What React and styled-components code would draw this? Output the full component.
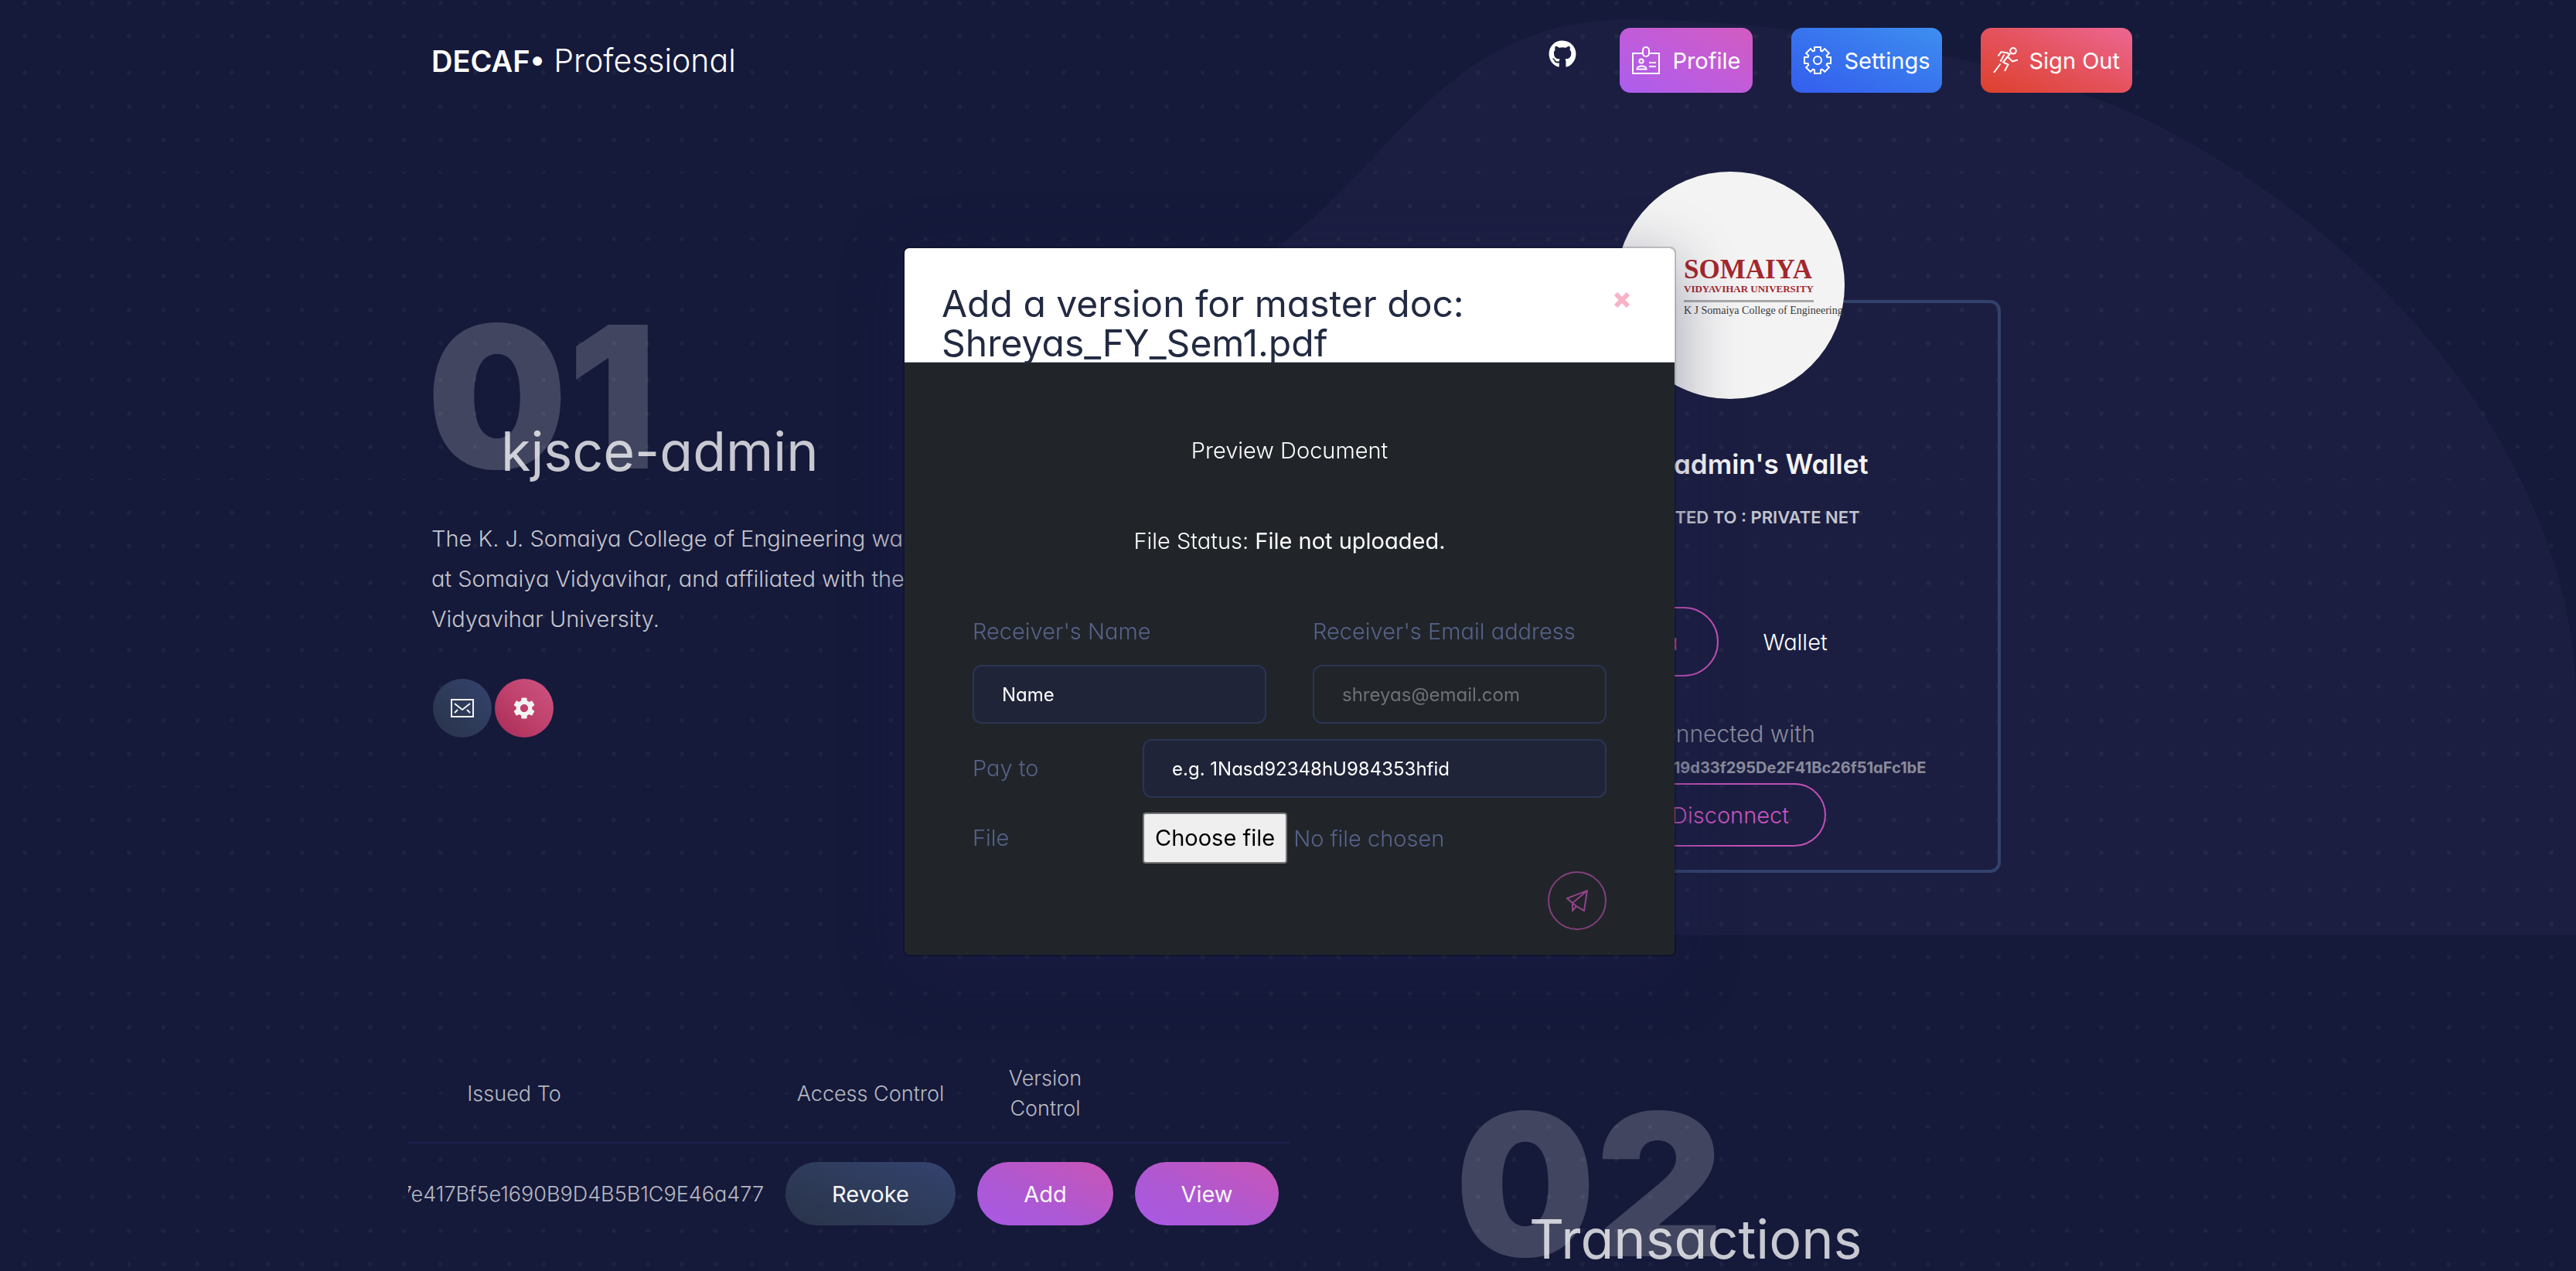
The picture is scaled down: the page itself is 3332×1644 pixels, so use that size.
import React from "react";
import styled, { createGlobalStyle, css } from "styled-components";
import { FaGithub } from "react-icons/fa";
import { MdSettings } from "react-icons/md";

const GlobalStyle = createGlobalStyle`
  *, *::before, *::after { box-sizing: border-box; }
  body {
    margin: 0;
    background: #15193a;
    color: #ffffff;
    font-family: Inter, "Open Sans", sans-serif;
    font-size: 29px;
    font-weight: 300;
    font-feature-settings: "cv11";
  }
  h1, h2, h3, h4, p { margin: 0; font-weight: inherit; }
  button, input { font: inherit; font-feature-settings: inherit; }
  button { cursor: pointer; }
`;

const violet = "linear-gradient(to top right, #a85ae6, #ad58d4 40%, #c955b6)";

const Page = styled.div`
  position: relative;
  min-height: 100vh;
  padding-left: 4px;
  overflow: hidden;
`;

const Backdrop = styled.svg`
  position: absolute;
  inset: 0;
  width: 100%;
  height: 100%;
`;

const Container = styled.div`
  position: relative;
  max-width: 2280px;
  margin: 0 auto;
`;

/* Header */

const Header = styled.header`
  display: flex;
  align-items: center;
  justify-content: space-between;
  padding: 36px 50px 0 30px;
`;

const Brand = styled.a`
  color: #ffffff;
  font-size: 41px;
  text-decoration: none;
  strong {
    font-size: 38px;
    font-weight: 600;
  }
`;

const Nav = styled.nav`
  display: flex;
  gap: 50px;
`;

const GithubLink = styled.a`
  display: flex;
  padding: 16px 6px 0 0;
  color: #ffffff;
`;

const navTones = {
  violet: "linear-gradient(to top right, #ab5eee, #bf5cdc 45%, #d25bc0)",
  blue: "linear-gradient(to top right, #345eee, #3874ee 50%, #3d8ff0)",
  red: "linear-gradient(to top right, #dd402c, #e4525c 50%, #ec6793)",
};

const NavButton = styled.button`
  display: flex;
  align-items: center;
  gap: ${(p) => p.$gap}px;
  height: 84px;
  padding: 0 16px;
  border: 0;
  border-radius: 14px;
  background: ${(p) => navTones[p.$tone]};
  color: #ffffff;
  font-weight: 400;
`;

/* Hero */

const Hero = styled.section`
  display: flex;
  justify-content: space-between;
  padding: 0 220px 0 30px;
`;

const Intro = styled.div`
  width: 900px;
  margin-top: 293px;
`;

const Title = styled.h1`
  display: flex;
  flex-direction: column;
`;

const TitleNumber = styled.span`
  margin-left: -6px;
  color: rgba(243, 243, 243, 0.2);
  font-size: 256px;
  font-weight: 900;
  line-height: 200px;
`;

const TitleText = styled.span`
  margin: -69px 0 0 90px;
  color: rgba(255, 255, 255, 0.76);
  font-size: 70px;
  font-weight: 400;
  line-height: 80px;
`;

const Bio = styled.p`
  margin-top: 47px;
  color: rgba(255, 255, 255, 0.76);
  line-height: 52px;
`;

const RoundActions = styled.div`
  display: flex;
  gap: 4px;
  margin: 51px 0 0 2px;
`;

const roundTones = {
  slate: css`
    background: linear-gradient(to top right, #29344a, #2e3b5a 50%, #344370);
    color: #f3f3f3;
  `,
  pink: css`
    background: linear-gradient(to top right, #a82c58, #bf416c 50%, #cf5583);
    color: #f3f3f3;
  `,
  outline: css`
    border: 2px solid #80407c;
    background: transparent;
    color: #8f4489;
  `,
};

const RoundButton = styled.button`
  display: flex;
  align-items: center;
  justify-content: center;
  width: 76px;
  height: 76px;
  padding: 0;
  border: 0;
  border-radius: 50%;
  ${(p) => roundTones[p.$tone]}
`;

/* Wallet card */

const Card = styled.article`
  display: flex;
  flex-direction: column;
  align-items: center;
  width: 700px;
  margin-top: 268px;
  padding-bottom: 30px;
  border: 4px solid #32426c;
  border-radius: 14px;
`;

const Avatar = styled.div`
  display: flex;
  flex-direction: column;
  align-items: flex-start;
  width: 296px;
  height: 294px;
  margin-top: -170px;
  padding: 110px 0 0 88px;
  border-radius: 50%;
  background: #f3f3f3;
  font-family: "Liberation Serif", serif;
  white-space: nowrap;
`;

const LogoName = styled.strong`
  color: #a3282e;
  font-size: 35px;
  font-weight: 700;
  line-height: 34px;
`;

const LogoSub = styled.span`
  padding-bottom: 6px;
  border-bottom: 3px solid #a9a9ab;
  color: #a3282e;
  font-size: 13px;
  font-weight: 700;
  line-height: 16px;
`;

const LogoCollege = styled.span`
  margin-top: 2px;
  color: #3a3a3c;
  font-size: 14px;
  font-weight: 400;
  line-height: 18px;
`;

const CardTitle = styled.h2`
  margin-top: 59px;
  color: #f3f3f5;
  font-size: 35px;
  font-weight: 600;
  line-height: 50px;
`;

const Network = styled.h3`
  margin-top: 26px;
  color: #c4c5ce;
  font-size: 22px;
  font-weight: 600;
  line-height: 36px;
`;

const Tabs = styled.div`
  display: flex;
  margin-top: 98px;
`;

const Tab = styled.button`
  height: 90px;
  padding: 0 ${(p) => (p.$active ? 50 : 56)}px;
  border: 2px solid ${(p) => (p.$active ? "#c050b4" : "transparent")};
  border-radius: 45px;
  background: transparent;
  color: ${(p) => (p.$active ? "#c050b4" : "#ffffff")};
`;

const Connected = styled.p`
  margin-top: 53px;
  color: #8a8b9c;
  font-size: 30px;
  line-height: 42px;
`;

const Address = styled.p`
  margin-top: 8px;
  color: #8a8b9c;
  font-size: 20px;
  font-weight: 700;
  line-height: 30px;
`;

const Disconnect = styled.button`
  height: 82px;
  margin-top: 5px;
  padding: 0 46px;
  border: 2px solid #c050b4;
  border-radius: 41px;
  background: transparent;
  color: #c955bd;
`;

/* Documents */

const Lower = styled.section`
  display: flex;
  align-items: flex-start;
  justify-content: space-between;
  margin-top: 222px;
`;

const TableClip = styled.div`
  display: flex;
  justify-content: flex-end;
  width: 1140px;
  overflow: hidden;
`;

const Table = styled.table`
  flex: none;
  width: 1340px;
  border-collapse: collapse;
  table-layout: fixed;
  color: rgba(255, 255, 255, 0.7);
  text-align: center;
`;

const Col = styled.col`
  width: ${(p) => p.$width}px;
`;

const Th = styled.th`
  padding: 24px 14px;
  padding-inline: ${(p) => (p.$wrap ? "44px" : "14px")};
  border-bottom: 2px solid #1f2250;
  font-size: 27px;
  font-weight: 300;
  line-height: 39px;
`;

const Td = styled.td`
  padding: 24px 14px;
  font-size: 27px;
  text-align: right;
  white-space: nowrap;
`;

const PillButton = styled.button`
  width: 100%;
  height: 82px;
  border: 0;
  border-radius: 41px;
  background: ${(p) =>
    p.$violet
      ? violet
      : "linear-gradient(to top right, #29344a, #2e3b5a 50%, #344370)"};
  color: #f6f6f8;
  font-size: 29px;
  font-weight: 400;
`;

const Transactions = styled.div`
  width: 920px;
  margin-top: 81px;
`;

/* Modal */

const Overlay = styled.div`
  position: fixed;
  inset: 0;
  padding: 319px 0 0 4px;
`;

const Dialog = styled.section`
  width: 1000px;
  margin: 0 auto;
  border: 2px solid rgba(0, 0, 0, 0.2);
  border-radius: 8px;
  background: #212529;
  background-clip: padding-box;
  box-shadow: 0 20px 80px rgba(30, 33, 75, 0.4);
`;

const DialogHeader = styled.header`
  display: flex;
  align-items: flex-start;
  justify-content: space-between;
  height: 148px;
  padding: 46px 58px 0 48px;
  border-bottom: 1px solid #b9bcc0;
  border-radius: 6px 6px 0 0;
  background: #ffffff;
`;

const DialogTitle = styled.h2`
  width: 720px;
  color: #222a42;
  font-size: 48px;
  font-weight: 400;
  line-height: 51px;
`;

const Close = styled.button`
  display: flex;
  margin-top: 11px;
  padding: 0;
  border: 0;
  background: none;
  color: #f9b3c9;
`;

const DialogBody = styled.form`
  display: flex;
  flex-direction: column;
  padding: 93px 88px 32px;
`;

const Line = styled.p`
  margin-bottom: 75px;
  line-height: 42px;
  text-align: center;
  strong { font-weight: 400; }
`;

const FieldPair = styled.div`
  display: grid;
  grid-template-columns: 1fr 1fr;
  gap: 60px;
  margin-bottom: 20px;
`;

const Field = styled.div`
  display: flex;
  flex-direction: column;
  gap: 22px;
`;

const FieldRow = styled.div`
  display: grid;
  grid-template-columns: 220px 1fr;
  align-items: center;
  margin-bottom: 19px;
`;

const Label = styled.label`
  color: #56628a;
  line-height: 42px;
`;

const TextInput = styled.input`
  width: 100%;
  height: 76px;
  padding: 0 36px;
  border: 2px solid #2b3553;
  border-radius: 12px;
  background: ${(p) => (p.$filled ? "#1f2438" : "transparent")};
  color: #ffffff;
  font-size: 24px;
  font-weight: 400;
  outline: 0;
  &::placeholder {
    color: ${(p) => (p.$filled ? "#ffffff" : "#6e7174")};
    opacity: 1;
  }
`;

const FilePicker = styled.label`
  display: flex;
  align-items: center;
  gap: 8px;
  color: #56628a;
  cursor: pointer;
`;

const HiddenFile = styled.input`
  position: absolute;
  width: 1px;
  height: 1px;
  opacity: 0;
`;

const FileButton = styled.span`
  padding: 10px 14px;
  border: 2px solid #767676;
  border-radius: 4px;
  background: #efefef;
  color: #000000;
  font-weight: 400;
  line-height: 42px;
`;

const Actions = styled.div`
  display: flex;
  justify-content: flex-end;
  margin-top: -9px;
`;

/* Icons */

const Stroke = ({ size, width = size, box, weight = 2, children }) => (
  <svg
    width={width}
    height={size}
    viewBox={box}
    fill="none"
    stroke="currentColor"
    strokeWidth={weight}
    aria-hidden="true"
  >
    {children}
  </svg>
);

const BadgeIcon = () => (
  <Stroke size={36} box="0 0 36 36">
    <path d="M14 9H1v26h34V9H22" />
    <rect x="14" y="1" width="8" height="12" rx="4" />
    <circle cx="12" cy="19" r="2.6" />
    <path d="M6.5 29.5c0-5.5 12-5.5 12 0z" />
    <path d="M22 21h9M22 26h9" />
  </Stroke>
);

const gearPath =
  Array.from({ length: 8 }, (_, i) => {
    const a = (i * Math.PI) / 4;
    return [
      [12.5, -4],
      [17, -4],
      [17, 4],
      [12.5, 4],
    ]
      .map(([r, t]) => {
        const x = 18 + r * Math.cos(a) - t * Math.sin(a);
        const y = 18 + r * Math.sin(a) + t * Math.cos(a);
        return `${x.toFixed(2)} ${y.toFixed(2)}`;
      })
      .join("L");
  })
    .map((s, i) => (i ? "L" : "M") + s)
    .join("") + "Z";

const GearIcon = () => (
  <Stroke size={36} box="0 0 36 36">
    <path d={gearPath} />
    <circle cx="18" cy="18" r="5" />
  </Stroke>
);

const RunnerIcon = () => (
  <Stroke size={34} box="0 0 34 34">
    <circle cx="26" cy="4.8" r="3.8" />
    <path d="M6.5 11.5L10.5 6l8 1.5 3 1.5L13 19.5l6.5 3L15 31" />
    <path d="M14.5 9.5L9.5 18.5M9.5 21.5L1 33M19.5 13l5.5 5.5 7-2" />
  </Stroke>
);

const MailIcon = () => (
  <Stroke size={24} width={30} box="0 0 30 24">
    <rect x="1" y="1" width="28" height="22" />
    <path d="M5 6l10 8 10-8M5 18l4-4M25 18l-4-4" />
  </Stroke>
);

const PlaneIcon = () => (
  <Stroke size={28} box="0 0 28 28">
    <path d="M27 1L1 11l7 6v10l5-6 10 6zM27 1L8 17l5 4" />
  </Stroke>
);

const CloseIcon = () => (
  <Stroke size={20} box="0 0 20 20" weight={6}>
    <path d="M2 2l16 16M18 2L2 18" />
  </Stroke>
);

const dotColumns = [32, 76, 119.5, 167, 211.5, 255.5, 300, 346.6, 391];
const dotRows = [44.5, 87, 135, 179, 222, 269, 313, 356];

const Background = () => (
  <Backdrop aria-hidden="true">
    <path
      d="M1170 620C1400 480 1600 370 1700 280C1830 160 1900 25 2110 25C2320 25 2640 80 2800 167C3140 345 3332 650 3332 904V1209H1170Z"
      fill="#1b1e41"
    />
    <pattern id="dots" width="403" height="397" y="222" patternUnits="userSpaceOnUse">
      {dotColumns.map((x) => (
        <g key={x} fill="#ffffff" fillOpacity="0.045">
          <path d={`M${x - 2.8} 0h5.6a2.8 2.8 0 0 1-5.6 0z`} />
          {dotRows.map((y) => (
            <circle key={y} cx={x} cy={y} r="2.8" />
          ))}
        </g>
      ))}
    </pattern>
    <rect width="100%" height="100%" fill="url(#dots)" />
  </Backdrop>
);

const SectionTitle = ({ number, children }) => (
  <Title>
    <TitleNumber>{number}</TitleNumber>
    <TitleText>{children}</TitleText>
  </Title>
);

export default function App() {
  return (
    <>
      <GlobalStyle />
      <Page>
        <Background />
        <Container>
          <Header>
            <Brand href="#home">
              <strong>DECAF•</strong> Professional
            </Brand>
            <Nav>
              <GithubLink href="#github" aria-label="GitHub">
                <FaGithub size={36} />
              </GithubLink>
              <NavButton $tone="violet" $gap={16}>
                <BadgeIcon />
                Profile
              </NavButton>
              <NavButton $tone="blue" $gap={16}>
                <GearIcon />
                Settings
              </NavButton>
              <NavButton $tone="red" $gap={12}>
                <RunnerIcon />
                Sign Out
              </NavButton>
            </Nav>
          </Header>

          <Hero>
            <Intro>
              <SectionTitle number="01">kjsce-admin</SectionTitle>
              <Bio>
                The K. J. Somaiya College of Engineering was established
                <br />
                at Somaiya Vidyavihar, and affiliated with the Somaiya
                <br />
                Vidyavihar University.
              </Bio>
              <RoundActions>
                <RoundButton $tone="slate" aria-label="Email">
                  <MailIcon />
                </RoundButton>
                <RoundButton $tone="pink" aria-label="Settings">
                  <MdSettings size={34} />
                </RoundButton>
              </RoundActions>
            </Intro>

            <Card>
              <Avatar>
                <LogoName>SOMAIYA</LogoName>
                <LogoSub>VIDYAVIHAR UNIVERSITY</LogoSub>
                <LogoCollege>K J Somaiya College of Engineering</LogoCollege>
              </Avatar>
              <CardTitle>kjsce-admin's Wallet</CardTitle>
              <Network>CONNECTED TO : PRIVATE NET</Network>
              <Tabs>
                <Tab $active>Data</Tab>
                <Tab>Wallet</Tab>
              </Tabs>
              <Connected>Connected with</Connected>
              <Address>0x4b7E2a90Cd6819d33f295De2F41Bc26f51aFc1bE</Address>
              <Disconnect>Disconnect</Disconnect>
            </Card>
          </Hero>

          <Lower>
            <TableClip>
              <Table>
                <colgroup>
                  <Col $width={674} />
                  <Col $width={248} />
                  <Col $width={204} />
                  <Col $width={214} />
                </colgroup>
                <thead>
                  <tr>
                    <Th>Issued To</Th>
                    <Th>Access Control</Th>
                    <Th $wrap>Version Control</Th>
                    <Th />
                  </tr>
                </thead>
                <tbody>
                  <tr>
                    <Td>0x51C3d08A7e417Bf5e1690B9D4B5B1C9E46a477</Td>
                    <Td>
                      <PillButton>Revoke</PillButton>
                    </Td>
                    <Td>
                      <PillButton $violet>Add</PillButton>
                    </Td>
                    <Td>
                      <PillButton $violet>View</PillButton>
                    </Td>
                  </tr>
                </tbody>
              </Table>
            </TableClip>
            <Transactions>
              <SectionTitle number="02">Transactions</SectionTitle>
            </Transactions>
          </Lower>
        </Container>
      </Page>

      <Overlay>
        <Dialog role="dialog" aria-labelledby="dialog-title">
          <DialogHeader>
            <DialogTitle id="dialog-title">
              Add a version for master doc: Shreyas_FY_Sem1.pdf
            </DialogTitle>
            <Close aria-label="Close">
              <CloseIcon />
            </Close>
          </DialogHeader>
          <DialogBody>
            <Line>Preview Document</Line>
            <Line>
              File Status: <strong>File not uploaded.</strong>
            </Line>
            <FieldPair>
              <Field>
                <Label htmlFor="name">Receiver's Name</Label>
                <TextInput id="name" $filled placeholder="Name" />
              </Field>
              <Field>
                <Label htmlFor="email">Receiver's Email address</Label>
                <TextInput id="email" type="email" placeholder="shreyas@email.com" />
              </Field>
            </FieldPair>
            <FieldRow>
              <Label htmlFor="pay">Pay to</Label>
              <TextInput id="pay" $filled placeholder="e.g. 1Nasd92348hU984353hfid" />
            </FieldRow>
            <FieldRow>
              <Label htmlFor="file">File</Label>
              <FilePicker>
                <HiddenFile id="file" type="file" />
                <FileButton>Choose file</FileButton>
                No file chosen
              </FilePicker>
            </FieldRow>
            <Actions>
              <RoundButton $tone="outline" type="button" aria-label="Send">
                <PlaneIcon />
              </RoundButton>
            </Actions>
          </DialogBody>
        </Dialog>
      </Overlay>
    </>
  );
}
